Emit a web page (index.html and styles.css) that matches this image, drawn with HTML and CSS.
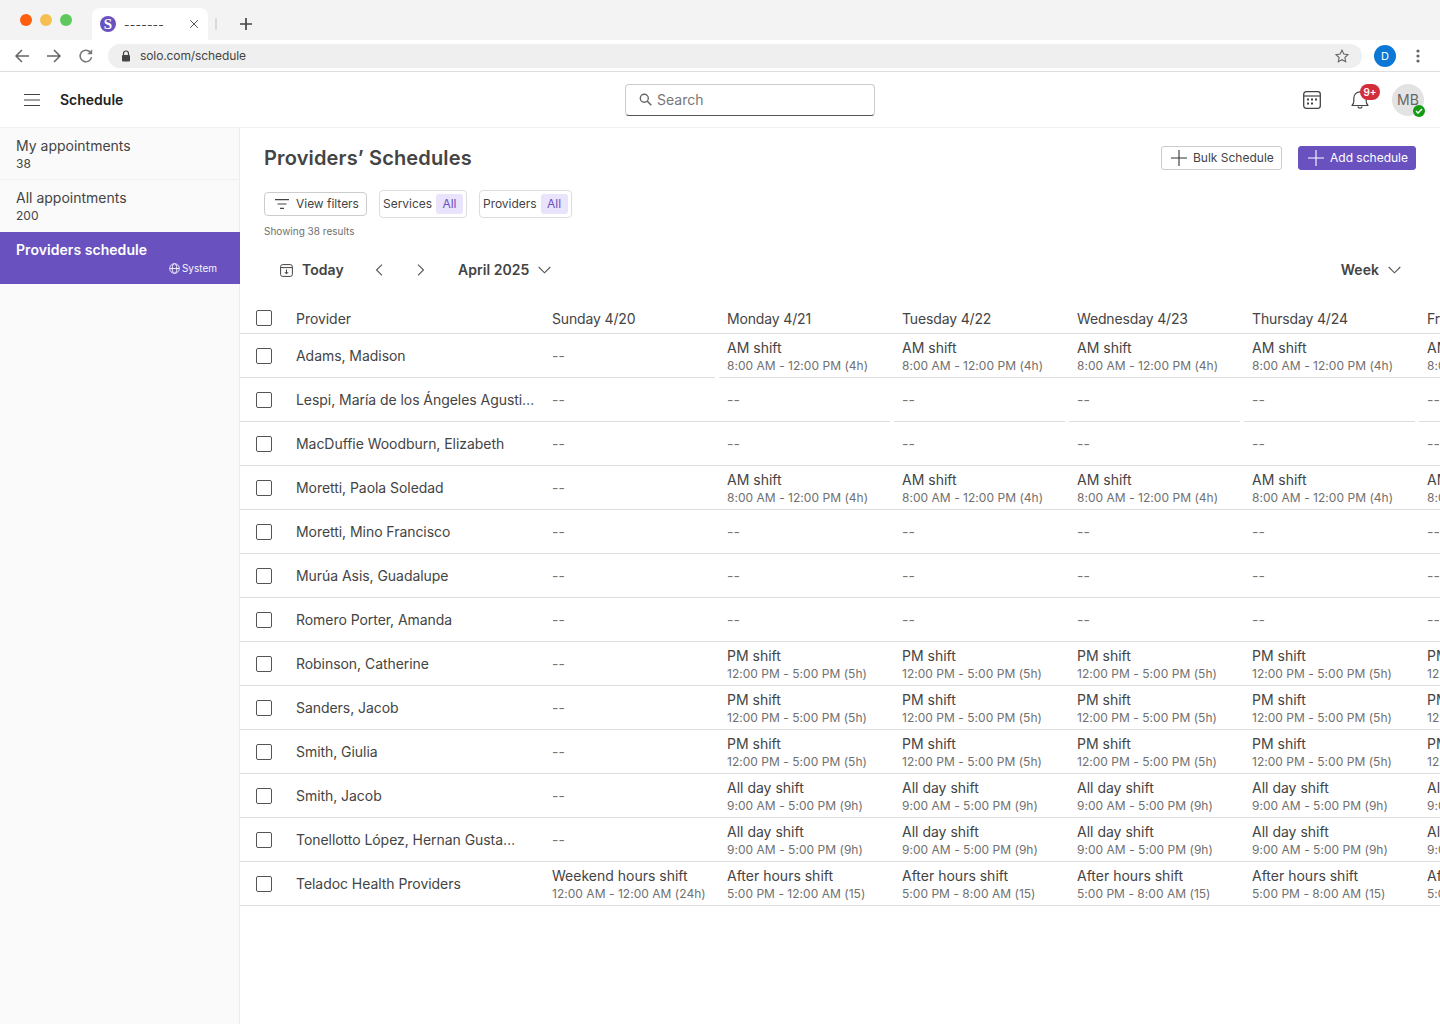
FILE: index.html
```html
<!DOCTYPE html>
<html lang="en">
<head>
<meta charset="utf-8">
<title>Schedule</title>
<link rel="stylesheet" href="styles.css">
</head>
<body>
<div class="tabstrip">
  <div class="lights"><span class="light red"></span><span class="light yellow"></span><span class="light green"></span></div>
  <div class="tab">
    <span class="favicon">S</span>
    <span class="tabtitle">-------</span>
    <svg class="tabx" width="10" height="10" viewBox="0 0 10 10"><path d="M1.2 1.2l7.6 7.6M8.8 1.2l-7.6 7.6" stroke="#555" stroke-width="1" fill="none"/></svg>
  </div>
  <span class="tabsep"></span>
  <svg class="newtab" width="14" height="14" viewBox="0 0 14 14"><path d="M7 1v12M1 7h12" stroke="#444" stroke-width="1.7" fill="none"/></svg>
</div>
<div class="addressbar">
  <svg width="16" height="16" viewBox="0 0 16 16"><path d="M15 8H2M8 2L2 8l6 6" stroke="#666" stroke-width="1.5" fill="none"/></svg>
  <svg width="16" height="16" viewBox="0 0 16 16"><path d="M1 8h13M8 2l6 6-6 6" stroke="#666" stroke-width="1.5" fill="none"/></svg>
  <svg width="16" height="16" viewBox="0 0 16 16"><path d="M13.6 9.2A5.8 5.8 0 1 1 12.2 4" stroke="#777" stroke-width="1.5" fill="none"/><path d="M14.2 1.2v5h-5z" fill="#777"/></svg>
  <div class="urlpill">
    <svg width="10" height="12" viewBox="0 0 10 12"><path d="M2.5 5V3.5a2.5 2.5 0 0 1 5 0V5" stroke="#444" stroke-width="1.2" fill="none"/><rect x="1" y="5" width="8" height="6.5" rx="1" fill="#444"/></svg>
    <span class="url">solo.com/schedule</span>
    <svg class="star" width="14" height="14" viewBox="0 0 14 14"><path d="M7 1.2l1.8 3.9 4.2.5-3.1 2.9.8 4.2L7 10.7l-3.7 2 .8-4.2L1 5.6l4.2-.5z" stroke="#666" stroke-width="1.1" fill="none"/></svg>
  </div>
  <span class="profile">D</span>
  <svg class="kebab" width="4" height="14" viewBox="0 0 4 14"><circle cx="2" cy="2" r="1.6" fill="#666"/><circle cx="2" cy="7" r="1.6" fill="#666"/><circle cx="2" cy="12" r="1.6" fill="#666"/></svg>
</div>
<header class="apphead">
  <div class="headleft">
    <svg width="16" height="12" viewBox="0 0 16 12"><path d="M0 .5h16M0 6h16M0 11.5h16" stroke="#444" stroke-width="1" fill="none"/></svg>
    <span class="apptitle">Schedule</span>
  </div>
  <div class="search">
    <svg width="13" height="13" viewBox="0 0 13 13"><circle cx="5.3" cy="5.3" r="4" stroke="#666" stroke-width="1.4" fill="none"/><path d="M8.3 8.3l4 4" stroke="#666" stroke-width="1.6" fill="none"/></svg>
    <span class="searchtext">Search</span>
  </div>
  <div class="headright">
    <svg class="calicon" width="18" height="18" viewBox="0 0 18 18"><rect x=".7" y=".7" width="16.6" height="16.6" rx="2.5" stroke="#444" stroke-width="1.3" fill="none"/><path d="M1 5h16" stroke="#444" stroke-width="1.2"/><g fill="#444"><rect x="4" y="7.5" width="2" height="2"/><rect x="8" y="7.5" width="2" height="2"/><rect x="12" y="7.5" width="2" height="2"/><rect x="4" y="11.5" width="2" height="2"/><rect x="8" y="11.5" width="2" height="2"/></g></svg>
    <div class="bellwrap">
      <svg width="18" height="20" viewBox="0 0 18 20"><path d="M1 15.5c1.3-1.2 1.8-2.4 1.8-4.5V8a6.2 6.2 0 0 1 12.4 0v3c0 2.1.5 3.3 1.8 4.5z" stroke="#444" stroke-width="1.2" fill="none" stroke-linejoin="round"/><path d="M6.8 16.5a2.3 2.3 0 0 0 4.4 0" stroke="#444" stroke-width="1.2" fill="none"/></svg>
      <span class="badge">9+</span>
    </div>
    <div class="avatar">MB
      <span class="status"><svg width="8" height="6" viewBox="0 0 8 6"><path d="M1 3l2 2 4-4" stroke="#fff" stroke-width="1.5" fill="none"/></svg></span>
    </div>
  </div>
</header>
<div class="layout">
  <nav class="sidebar">
    <div class="navitem"><div class="navname">My appointments</div><div class="navcount">38</div></div>
    <div class="navitem"><div class="navname">All appointments</div><div class="navcount">200</div></div>
    <div class="navitem active">
      <div class="navname">Providers schedule</div>
      <div class="navsys"><svg width="11" height="11" viewBox="0 0 11 11"><circle cx="5.5" cy="5.5" r="4.8" stroke="#fff" stroke-width=".9" fill="none"/><ellipse cx="5.5" cy="5.5" rx="2.2" ry="4.8" stroke="#fff" stroke-width=".9" fill="none"/><path d="M.7 5.5h9.6" stroke="#fff" stroke-width=".9"/></svg><span>System</span></div>
    </div>
  </nav>
  <main class="main">
    <div class="titlerow">
      <h1 class="title">Providers’ Schedules</h1>
      <div class="actions">
        <button class="btn btn-bulk"><svg width="16" height="16" viewBox="0 0 16 16"><path d="M8 0v16M0 8h16" stroke="#333" stroke-width="1.1"/></svg>Bulk Schedule</button>
        <button class="btn btn-add"><svg width="16" height="16" viewBox="0 0 16 16"><path d="M8 0v16M0 8h16" stroke="#fff" stroke-width="1.1"/></svg>Add schedule</button>
      </div>
    </div>
    <div class="filters">
      <button class="viewfilters"><svg width="14" height="10" viewBox="0 0 14 10"><path d="M0 .6h14M2.5 5h9M5 9.4h4" stroke="#444" stroke-width="1.1"/></svg>View filters</button>
      <div class="chip">Services<span class="chipval">All</span></div>
      <div class="chip">Providers<span class="chipval">All</span></div>
    </div>
    <div class="results">Showing 38 results</div>
    <div class="calbar">
      <div class="calleft">
        <svg class="todayicon" width="13" height="13" viewBox="0 0 13 13"><rect x=".6" y=".6" width="11.8" height="11.8" rx="2" stroke="#444" stroke-width="1" fill="none"/><path d="M.8 3.6h11.4" stroke="#444" stroke-width="1"/><path d="M6.5 5.5v4M4.8 8l1.7 2 1.7-2" stroke="#444" stroke-width="1" fill="none"/></svg>
        <span class="today">Today</span>
        <svg class="prev" width="8" height="12" viewBox="0 0 8 12"><path d="M7 .7L1.5 6 7 11.3" stroke="#555" stroke-width="1.1" fill="none"/></svg>
        <svg class="next" width="8" height="12" viewBox="0 0 8 12"><path d="M1 .7L6.5 6 1 11.3" stroke="#555" stroke-width="1.1" fill="none"/></svg>
        <span class="month">April 2025</span>
        <svg width="13" height="8" viewBox="0 0 13 8"><path d="M.7 1l5.8 5.8L12.3 1" stroke="#555" stroke-width="1.1" fill="none"/></svg>
      </div>
      <div class="calright">
        <span class="month">Week</span>
        <svg width="13" height="8" viewBox="0 0 13 8"><path d="M.7 1l5.8 5.8L12.3 1" stroke="#555" stroke-width="1.1" fill="none"/></svg>
      </div>
    </div>
    <div class="table">
      <div class="row head"><div class="lead"><span class="check"></span><span>Provider</span></div><div class="cell">Sunday 4/20</div><div class="cell">Monday 4/21</div><div class="cell">Tuesday 4/22</div><div class="cell">Wednesday 4/23</div><div class="cell">Thursday 4/24</div><div class="cell">Friday 4/25</div></div>

      <div class="row"><div class="lead"><span class="check"></span><span>Adams, Madison</span></div><div class="cell cut"><span class="none">--</span></div>
        <div class="cell"><b>AM shift</b><i>8:00 AM - 12:00 PM (4h)</i></div><div class="cell"><b>AM shift</b><i>8:00 AM - 12:00 PM (4h)</i></div><div class="cell"><b>AM shift</b><i>8:00 AM - 12:00 PM (4h)</i></div><div class="cell"><b>AM shift</b><i>8:00 AM - 12:00 PM (4h)</i></div><div class="cell"><b>AM shift</b><i>8:00 AM - 12:00 PM (4h)</i></div></div>

      <div class="row"><div class="lead"><span class="check"></span><span>Lespi, María de los Ángeles Agusti…</span></div><div class="cell"><span class="none">--</span></div>
        <div class="cell cut"><span class="none">--</span></div><div class="cell cut"><span class="none">--</span></div><div class="cell cut"><span class="none">--</span></div><div class="cell cut"><span class="none">--</span></div><div class="cell"><span class="none">--</span></div></div>

      <div class="row"><div class="lead"><span class="check"></span><span>MacDuffie Woodburn, Elizabeth</span></div><div class="cell"><span class="none">--</span></div>
        <div class="cell"><span class="none">--</span></div><div class="cell"><span class="none">--</span></div><div class="cell"><span class="none">--</span></div><div class="cell"><span class="none">--</span></div><div class="cell"><span class="none">--</span></div></div>

      <div class="row"><div class="lead"><span class="check"></span><span>Moretti, Paola Soledad</span></div><div class="cell"><span class="none">--</span></div>
        <div class="cell"><b>AM shift</b><i>8:00 AM - 12:00 PM (4h)</i></div><div class="cell"><b>AM shift</b><i>8:00 AM - 12:00 PM (4h)</i></div><div class="cell"><b>AM shift</b><i>8:00 AM - 12:00 PM (4h)</i></div><div class="cell"><b>AM shift</b><i>8:00 AM - 12:00 PM (4h)</i></div><div class="cell"><b>AM shift</b><i>8:00 AM - 12:00 PM (4h)</i></div></div>

      <div class="row"><div class="lead"><span class="check"></span><span>Moretti, Mino Francisco</span></div><div class="cell"><span class="none">--</span></div>
        <div class="cell"><span class="none">--</span></div><div class="cell"><span class="none">--</span></div><div class="cell"><span class="none">--</span></div><div class="cell"><span class="none">--</span></div><div class="cell"><span class="none">--</span></div></div>

      <div class="row"><div class="lead"><span class="check"></span><span>Murúa Asis, Guadalupe</span></div><div class="cell"><span class="none">--</span></div>
        <div class="cell"><span class="none">--</span></div><div class="cell"><span class="none">--</span></div><div class="cell"><span class="none">--</span></div><div class="cell"><span class="none">--</span></div><div class="cell"><span class="none">--</span></div></div>

      <div class="row"><div class="lead"><span class="check"></span><span>Romero Porter, Amanda</span></div><div class="cell"><span class="none">--</span></div>
        <div class="cell"><span class="none">--</span></div><div class="cell"><span class="none">--</span></div><div class="cell"><span class="none">--</span></div><div class="cell"><span class="none">--</span></div><div class="cell"><span class="none">--</span></div></div>

      <div class="row"><div class="lead"><span class="check"></span><span>Robinson, Catherine</span></div><div class="cell"><span class="none">--</span></div>
        <div class="cell"><b>PM shift</b><i>12:00 PM - 5:00 PM (5h)</i></div><div class="cell"><b>PM shift</b><i>12:00 PM - 5:00 PM (5h)</i></div><div class="cell"><b>PM shift</b><i>12:00 PM - 5:00 PM (5h)</i></div><div class="cell"><b>PM shift</b><i>12:00 PM - 5:00 PM (5h)</i></div><div class="cell"><b>PM shift</b><i>12:00 PM - 5:00 PM (5h)</i></div></div>

      <div class="row"><div class="lead"><span class="check"></span><span>Sanders, Jacob</span></div><div class="cell"><span class="none">--</span></div>
        <div class="cell"><b>PM shift</b><i>12:00 PM - 5:00 PM (5h)</i></div><div class="cell"><b>PM shift</b><i>12:00 PM - 5:00 PM (5h)</i></div><div class="cell"><b>PM shift</b><i>12:00 PM - 5:00 PM (5h)</i></div><div class="cell"><b>PM shift</b><i>12:00 PM - 5:00 PM (5h)</i></div><div class="cell"><b>PM shift</b><i>12:00 PM - 5:00 PM (5h)</i></div></div>

      <div class="row"><div class="lead"><span class="check"></span><span>Smith, Giulia</span></div><div class="cell"><span class="none">--</span></div>
        <div class="cell"><b>PM shift</b><i>12:00 PM - 5:00 PM (5h)</i></div><div class="cell"><b>PM shift</b><i>12:00 PM - 5:00 PM (5h)</i></div><div class="cell"><b>PM shift</b><i>12:00 PM - 5:00 PM (5h)</i></div><div class="cell"><b>PM shift</b><i>12:00 PM - 5:00 PM (5h)</i></div><div class="cell"><b>PM shift</b><i>12:00 PM - 5:00 PM (5h)</i></div></div>

      <div class="row"><div class="lead"><span class="check"></span><span>Smith, Jacob</span></div><div class="cell"><span class="none">--</span></div>
        <div class="cell"><b>All day shift</b><i>9:00 AM - 5:00 PM (9h)</i></div><div class="cell"><b>All day shift</b><i>9:00 AM - 5:00 PM (9h)</i></div><div class="cell"><b>All day shift</b><i>9:00 AM - 5:00 PM (9h)</i></div><div class="cell"><b>All day shift</b><i>9:00 AM - 5:00 PM (9h)</i></div><div class="cell"><b>All day shift</b><i>9:00 AM - 5:00 PM (9h)</i></div></div>

      <div class="row"><div class="lead"><span class="check"></span><span>Tonellotto López, Hernan Gusta…</span></div><div class="cell"><span class="none">--</span></div>
        <div class="cell"><b>All day shift</b><i>9:00 AM - 5:00 PM (9h)</i></div><div class="cell"><b>All day shift</b><i>9:00 AM - 5:00 PM (9h)</i></div><div class="cell"><b>All day shift</b><i>9:00 AM - 5:00 PM (9h)</i></div><div class="cell"><b>All day shift</b><i>9:00 AM - 5:00 PM (9h)</i></div><div class="cell"><b>All day shift</b><i>9:00 AM - 5:00 PM (9h)</i></div></div>

      <div class="row"><div class="lead"><span class="check"></span><span>Teladoc Health Providers</span></div><div class="cell"><b>Weekend hours shift</b><i>12:00 AM - 12:00 AM (24h)</i></div>
        <div class="cell"><b>After hours shift</b><i>5:00 PM - 12:00 AM (15)</i></div><div class="cell"><b>After hours shift</b><i>5:00 PM - 8:00 AM (15)</i></div><div class="cell"><b>After hours shift</b><i>5:00 PM - 8:00 AM (15)</i></div><div class="cell"><b>After hours shift</b><i>5:00 PM - 8:00 AM (15)</i></div><div class="cell"><b>After hours shift</b><i>5:00 PM - 8:00 AM (15)</i></div></div>
    </div>
  </main>
</div>
</body>
</html>
```
FILE: styles.css
```css
* { box-sizing: border-box; }
html, body { margin: 0; padding: 0; }
body {
  width: 1440px; height: 1024px; overflow: hidden;
  display: flex; flex-direction: column;
  font-family: Inter, "Noto Sans", sans-serif; color: #444; background: #fff;
  font-size: 14px;
}
button { font: inherit; cursor: pointer; }

/* browser chrome */
.tabstrip { height: 40px; flex: none; background: #f3f3f3; display: flex; align-items: flex-end; padding-left: 20px; }
.lights { display: flex; gap: 8px; align-self: flex-start; margin-top: 14px; width: 72px; }
.light { width: 12px; height: 12px; border-radius: 50%; }
.red { background: #fb5f0f; } .yellow { background: #f5c050; } .green { background: #5ec85c; }
.tab { width: 116px; height: 32px; background: #fff; border-radius: 8px 8px 0 0; display: flex; align-items: center; padding-left: 8px; font-size: 12px; color: #444; }
.favicon { width: 16px; height: 16px; border-radius: 50%; background: #6952bf; color: #fff; font: 700 15px/16px "Liberation Serif", serif; text-align: center; }
.tabtitle { margin-left: 8px; width: 65px; letter-spacing: .2px; }
.tabsep { width: 2px; height: 12px; background: #dcdcdc; margin: 0 0 10px 7px; }
.newtab { margin: 0 0 9px 22px; }
.addressbar { height: 32px; flex: none; background: #fff; border-bottom: 1px solid #dedede; display: flex; align-items: center; padding: 0 20px 0 14px; gap: 16px; }
.urlpill { width: 1254px; margin-left: -2px; height: 24px; border-radius: 12px; background: #efefef; display: flex; align-items: center; padding: 0 13px 0 13px; gap: 9px; }
.url { font-size: 12px; color: #444; letter-spacing: -.1px; }
.star { margin-left: auto; }
.profile { width: 22px; height: 22px; margin-left: -4px; border-radius: 50%; background: #0a78d4; color: #fff; font-size: 11px; line-height: 22px; text-align: center; }
.kebab { margin-left: 4px; }

/* app header */
.apphead { height: 56px; flex: none; display: grid; grid-template-columns: 625px 250px 1fr; align-items: center; border-bottom: 1px solid #f0f0f0; }
.headleft { display: flex; align-items: center; gap: 20px; padding-left: 24px; }
.apptitle { font-size: 14px; font-weight: 600; color: #222; }
.search { height: 32px; border: 1px solid #ccc; border-bottom-color: #555; border-radius: 4px; display: flex; align-items: center; gap: 5px; padding-left: 13px; color: #777; font-size: 14px; }
.searchtext { margin-bottom: 1px; }
.headright { display: flex; align-items: center; justify-content: flex-end; padding-right: 16px; }
.calicon { margin-right: 30px; }
.bellwrap { position: relative; width: 18px; height: 20px; margin-right: 23px; }
.badge { position: absolute; left: 9px; top: -6px; width: 20px; height: 16px; border-radius: 8px; background: #d22e3a; color: #fff; font-size: 10px; font-weight: 600; line-height: 16px; text-align: center; }
.avatar { position: relative; width: 32px; height: 32px; border-radius: 50%; background: #e3e3e3; color: #666; font-size: 14px; line-height: 32px; text-align: center; }
.status { position: absolute; left: 21px; top: 21px; width: 12px; height: 12px; border-radius: 50%; background: #119c11; display: flex; align-items: center; justify-content: center; }

/* layout */
.layout { flex: 1; min-height: 0; display: flex; }
.sidebar { width: 240px; flex: none; background: #fafafa; border-right: 1px solid #ececec; }
.navitem { height: 52px; padding: 9px 16px 0; border-bottom: 1px solid #f0f0f0; color: #444; margin-right: -1px; }
.navitem:nth-child(2) { border-bottom: 0; }
.navname { font-size: 14px; line-height: 18px; }
.navcount { font-size: 12px; line-height: 18px; }
.navitem.active { background: #6952bf; color: #fff; border-bottom: 0; }
.navitem.active .navname { font-weight: 600; letter-spacing: .05px; }
.navsys { display: flex; justify-content: flex-end; align-items: center; gap: 2px; font-size: 10px; line-height: 18px; padding-right: 7px; opacity: .95; }

/* main */
.main { flex: 1; min-width: 0; overflow: hidden; padding-top: 18px; }
.titlerow { display: flex; justify-content: space-between; align-items: center; height: 24px; padding: 0 24px; }
.title { margin: 0; font-size: 20px; font-weight: 600; color: #444; letter-spacing: .15px; }
.actions { display: flex; gap: 16px; }
.btn { height: 24px; border-radius: 3px; display: flex; align-items: center; gap: 6px; font-size: 12px; padding: 0 0 1px 9px; border: 1px solid #ccc; background: #fff; color: #444; white-space: nowrap; }
.btn svg { flex: none; }
.btn-add { background: #6952bf; border-color: #6952bf; color: #fff; }
.btn-bulk { width: 121px; } .btn-add { width: 118px; }
.filters { display: flex; align-items: center; gap: 12px; margin: 20px 0 0 24px; }
.viewfilters { width: 103px; height: 24px; display: flex; align-items: center; gap: 7px; padding: 0 0 1px 10px; border: 1px solid #ccc; border-radius: 4px; background: #fff; font-size: 12px; color: #444; letter-spacing: -.03px; }
.chip { height: 28px; border: 1px solid #ddd; border-radius: 4px; display: flex; align-items: center; gap: 4px; padding: 0 3px 1px; font-size: 12px; color: #444; letter-spacing: -.03px; }
.chipval { width: 27px; height: 20px; line-height: 19px; text-align: center; border-radius: 3px; background: #e9e3fb; color: #6952bf; }
.results { margin: 6px 0 0 24px; font-size: 10px; line-height: 14px; color: #707070; }
.calbar { height: 40px; margin-top: 12px; display: flex; justify-content: space-between; align-items: center; padding: 0 40px; }
.calleft, .calright { display: flex; align-items: center; }
.today, .month { font-size: 14px; font-weight: 600; color: #444; margin-bottom: 1px; letter-spacing: .05px; }
.today { margin-left: 9px; width: 73px; }
.prev { margin-right: 34px; } .next { margin-right: 33px; }
.month + svg { margin-left: 9px; }
.calright { margin-right: -1px; }
.table { margin-top: 12px; }
.row { display: flex; width: 1354px; height: 44px; }
.row.head { height: 32px; }
.lead { flex: none; width: 304px; display: flex; align-items: center; gap: 24px; padding-left: 16px; letter-spacing: -.05px; background: linear-gradient(#dedede, #dedede) left bottom / 100% 1px no-repeat; }
.row:not(.head) .lead span:last-child { margin-bottom: 1px; }
.check { flex: none; width: 16px; height: 16px; border: 1px solid #555; border-radius: 2px; background: #fff; }
.cell { flex: none; width: 175px; padding-left: 8px; display: flex; flex-direction: column; justify-content: center; white-space: nowrap; background: linear-gradient(#dedede, #dedede) left bottom / 100% 1px no-repeat; }
.row.head .cell { letter-spacing: -.15px; }
.cell.cut { background-size: 171px 1px; }
.cell b { font-weight: 400; line-height: 18px; margin-top: 2px; color: #444; }
.cell i { font-style: normal; font-size: 12px; line-height: 18px; color: #707070; letter-spacing: .03px; }
.none { color: #777; margin-bottom: 1px; }
```
